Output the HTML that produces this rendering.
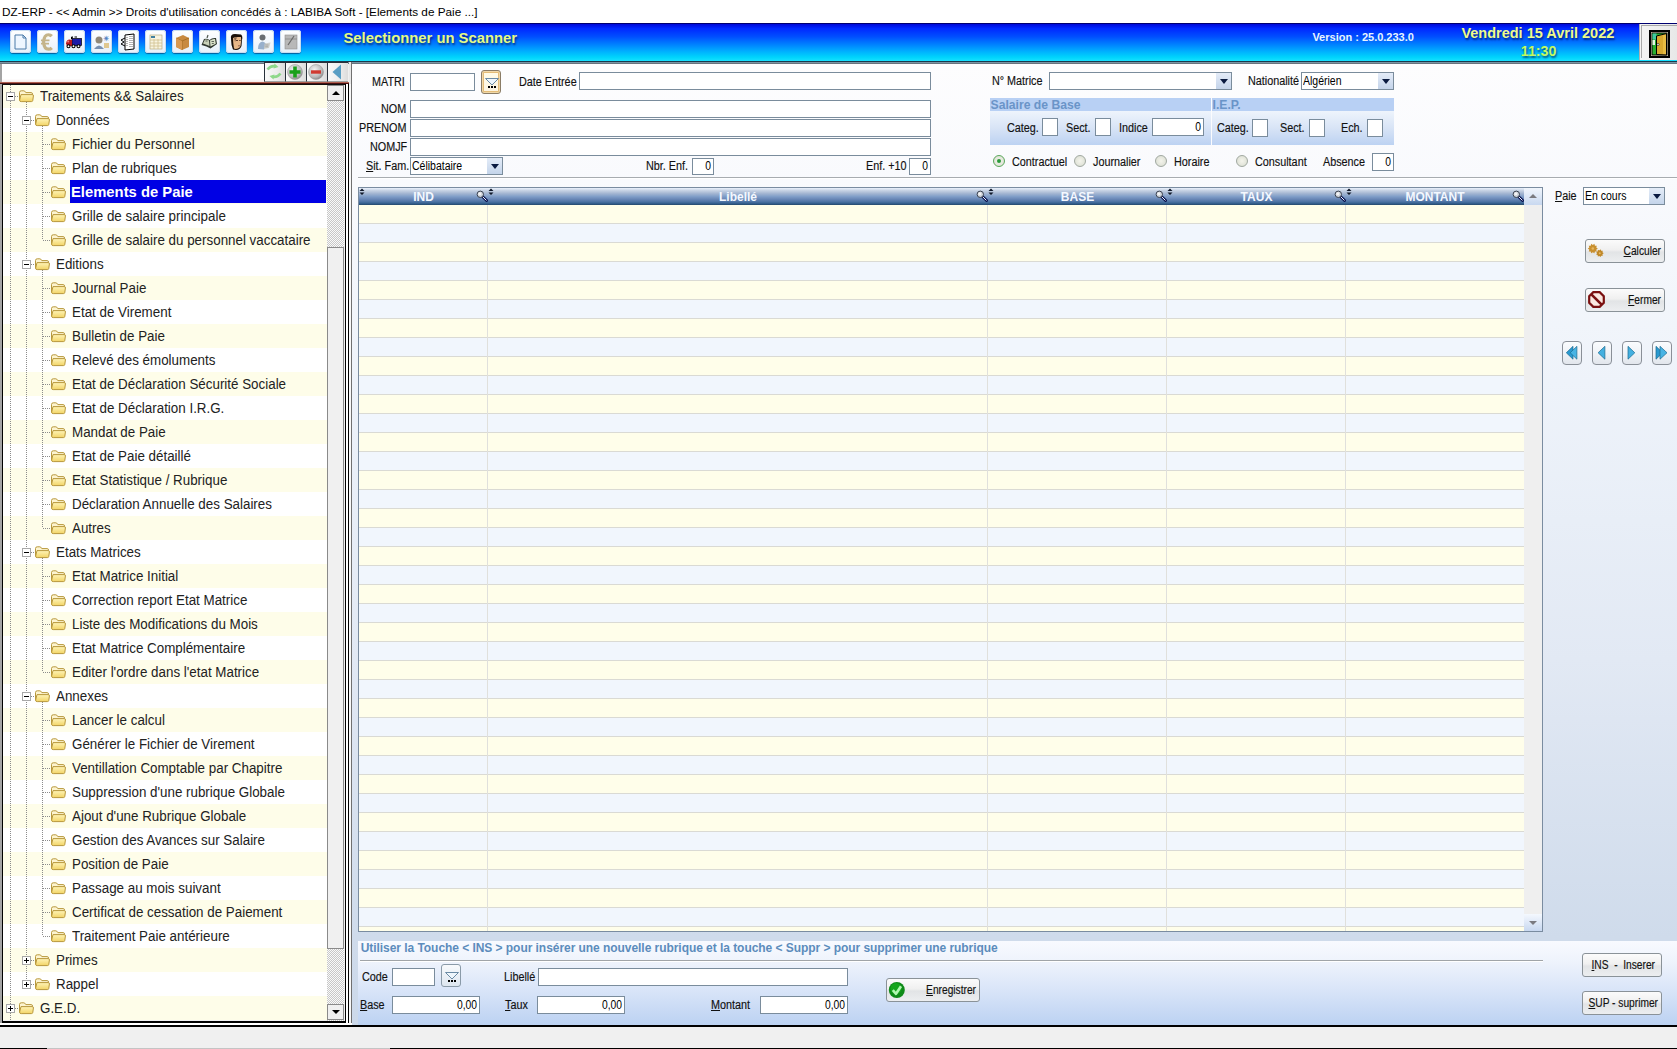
<!DOCTYPE html>
<html><head><meta charset="utf-8"><title>DZ-ERP</title>
<style>
html,body{margin:0;padding:0;}
body{width:1677px;height:1049px;overflow:hidden;position:relative;background:#f0f0f0;font-family:"Liberation Sans",sans-serif;}
.a{position:absolute;}
.t{position:absolute;line-height:0;white-space:nowrap;}
.ib{position:absolute;width:21px;height:23px;border-radius:3px;background:linear-gradient(#ffffff,#e6f0fa);box-shadow:0 1px 1px rgba(0,20,80,.55),inset 0 0 0 1px #c8dcf0;overflow:hidden;}
.ib svg{position:absolute;left:0;top:0;}
.tb{position:absolute;width:21px;height:20px;background:linear-gradient(90deg,#fafafa,#ececec 60%,#dcdcdc);border-left:1px solid #28303a;border-top:1px solid #28303a;border-bottom:1px solid #a0a0a0;box-sizing:border-box;}
.tb svg{position:absolute;left:-1px;top:-1px;}
.tree{position:absolute;left:3px;top:85px;width:324px;height:936px;overflow:hidden;}
.tree .tr{position:absolute;left:0;width:324px;height:24px;}
.tree .vl{position:absolute;width:1px;background-image:linear-gradient(#8c8c8c 50%,transparent 50%);background-size:1px 2px;}
.tree .hl{position:absolute;height:1px;background-image:linear-gradient(90deg,#8c8c8c 50%,transparent 50%);background-size:2px 1px;}
.tree .pm{position:absolute;width:9px;height:9px;border:1px solid #a8a8a8;box-sizing:border-box;background:#fff;}
.tree .pm-h{position:absolute;left:1px;top:3px;width:5px;height:1px;background:#000;}
.tree .pm-v{position:absolute;left:3px;top:1px;width:1px;height:5px;background:#000;}
.tree .fdw{position:absolute;width:17px;height:14px;}
.tree .fd{display:block;}
.tree .tt{position:absolute;line-height:0;font-size:14px;color:#222;white-space:nowrap;transform:scaleX(.955);transform-origin:0 0;}
.tree .tts{position:absolute;line-height:0;font-size:14.8px;font-weight:bold;color:#fff;white-space:nowrap;}
.tree .sel{position:absolute;width:256px;height:23px;background:#0000e4;}
.sbb{position:absolute;width:17px;background:#f0f0f0;border:1px solid #8a8a8a;box-sizing:border-box;}
.arr-up{position:absolute;left:3.5px;top:5px;width:0;height:0;border-left:4px solid transparent;border-right:4px solid transparent;border-bottom:4px solid #000;}
.arr-dn{position:absolute;left:3.5px;top:5px;width:0;height:0;border-left:4px solid transparent;border-right:4px solid transparent;border-top:4px solid #000;}
.grid{position:absolute;overflow:hidden;}
.grid .gr{position:absolute;left:0;width:1165px;height:18px;border-bottom:1px solid #dadad4;}
.cdn{position:absolute;width:0;height:0;border-left:4px solid transparent;border-right:4px solid transparent;border-top:5px solid #0a1a40;}
.lk{position:absolute;border:1px solid;border-radius:3px;box-sizing:border-box;}
.lk svg{position:absolute;left:2px;top:3px;}
.rd{position:absolute;width:12px;height:12px;border-radius:50%;border:1px solid #a0a8a0;box-sizing:border-box;background:radial-gradient(#f4f4ec,#d8dcd0);}
.rdd{position:absolute;left:3px;top:3px;width:4px;height:4px;border-radius:50%;background:#2a9a3a;}
.srt{position:absolute;width:6px;height:8px;}
.srt svg,.mag svg{display:block;}
.mag{position:absolute;width:12px;height:12px;}
.nb{position:absolute;width:20px;height:24px;border:1px solid #8a9098;border-radius:4px;box-sizing:border-box;background:linear-gradient(#fafcfe,#f0f3f7 50%,#e2e6ec);}
.nb svg{position:absolute;left:1px;top:3px;}

</style></head><body>
<div class="a" style="left:0px;top:0px;width:1677px;height:23px;background:#fff"></div>
<div class="t" style="left:2px;top:11.83px;font-size:11.75px;color:#000;">DZ-ERP - &lt;&lt; Admin &gt;&gt; Droits d'utilisation concédés à : LABIBA Soft - [Elements de Paie ...]</div>
<div class="a" style="left:0px;top:23px;width:1677px;height:1px;background:#000070"></div>
<div class="a" style="left:0px;top:24px;width:1677px;height:37px;background:linear-gradient(#0008d8 0%,#0028ff 12%,#0050ff 35%,#0088ff 58%,#00b4ff 76%,#00d4fc 90%,#18e0ff 100%)"></div>
<div class="a" style="left:0px;top:61px;width:1677px;height:1px;background:#18384c"></div>
<div class="a" style="left:0px;top:62px;width:1677px;height:1px;background:#7894a4"></div>
<div class="a" style="left:0px;top:63px;width:1677px;height:1px;background:#68747e"></div>
<div class="ib" style="left:10px;top:30px"><svg width="21" height="23" viewBox="0 0 21 23"><path d="M5 5 H13 L16 8 V19 H5 Z" fill="#eef6ff" stroke="#4a7aa8" stroke-width="1"/><path d="M13 5 V8 H16" fill="none" stroke="#4a7aa8"/></svg></div>
<div class="ib" style="left:37px;top:30px"><svg width="21" height="23" viewBox="0 0 21 23"><path d="M14.8 6.2 Q13.5 4.8 11.5 4.8 Q7 4.8 6.6 12 Q7 19.2 11.5 19.2 Q13.5 19.2 14.8 17.8" fill="none" stroke="#c4b48a" stroke-width="3.2"/><path d="M4 10.3 H12.5 M4 13.7 H12" stroke="#c4b48a" stroke-width="1.8"/><path d="M9 8 Q10 6.5 12 6.5" fill="none" stroke="#f4eccc" stroke-width="1"/></svg></div>
<div class="ib" style="left:64px;top:30px"><svg width="21" height="23" viewBox="0 0 21 23"><rect x="8" y="8.5" width="9.5" height="7" fill="#1a1aa8" stroke="#000" stroke-width=".7"/><path d="M7.5 9 V7 H9 M10.5 7 H13" stroke="#000" stroke-width="1"/><path d="M2 13.5 Q2.5 9.5 5.5 9.5 L8 10 V16 H3 Z" fill="#b81820"/><circle cx="4.2" cy="11.5" r="1" fill="#f08080"/><circle cx="4.5" cy="16.3" r="1.5" fill="#fff" stroke="#000" stroke-width="1.1"/><circle cx="9.5" cy="16.3" r="1.5" fill="#fff" stroke="#000" stroke-width="1.1"/><circle cx="14.5" cy="16.3" r="1.5" fill="#fff" stroke="#000" stroke-width="1.1"/></svg></div>
<div class="ib" style="left:91px;top:30px"><svg width="21" height="23" viewBox="0 0 21 23"><circle cx="8" cy="10" r="3.5" fill="#908878"/><path d="M3 19 Q8 12 13 19 Z" fill="#7890b0"/><text x="12" y="11" font-family="Liberation Sans" font-size="7" font-weight="bold" fill="#5080c0">☀</text><rect x="13" y="13" width="5" height="5" fill="#e0c890"/></svg></div>
<div class="ib" style="left:118px;top:30px"><svg width="21" height="23" viewBox="0 0 21 23"><path d="M7 5 L16 4 V19 L7 20 Z" fill="#fff" stroke="#000" stroke-width="1"/><path d="M9 7 V17 M12 6 V17 M14 6 V17" stroke="#000" stroke-width=".6" stroke-dasharray="1 1"/><path d="M7 8 L3 10 L6 12 L3 14 L7 16" fill="none" stroke="#000" stroke-width="1"/></svg></div>
<div class="ib" style="left:145px;top:30px"><svg width="21" height="23" viewBox="0 0 21 23"><rect x="5" y="5" width="12" height="14" fill="#f8f4e0" stroke="#b0a070" stroke-width=".6"/><rect x="6" y="6" width="4" height="2" fill="#4080a0"/><path d="M5 10 H17 M5 13 H17 M5 16 H17 M9 9 V19 M13 9 V19" stroke="#d0c090" stroke-width=".8"/></svg></div>
<div class="ib" style="left:172px;top:30px"><svg width="21" height="23" viewBox="0 0 21 23"><path d="M4 8 L11 5 L17 8 V17 L10 20 L4 17 Z" fill="#c88a40"/><path d="M4 8 L10 11 L17 8" fill="none" stroke="#a06820" stroke-width=".8"/><path d="M10 11 V20" stroke="#a06820" stroke-width=".8"/><path d="M4 8 L10 11 V20 L4 17 Z" fill="#d89850"/></svg></div>
<div class="ib" style="left:199px;top:30px"><svg width="21" height="23" viewBox="0 0 21 23"><path d="M2.5 15 L5 9 Q8 8 10.5 10 Q13 7.5 17 8 L18 14 L11.5 18.5 Q8 16 2.5 15 Z" fill="#303830"/><path d="M4 13.5 L6 9.5 Q8.5 9 10 10.5 L10.5 16 Q7.5 14.5 4 13.5 Z" fill="#c8d0b8"/><path d="M11 10.5 Q13.5 8.5 16 9 L16.8 13.8 L11.5 16.5 Z" fill="#d8e0c8"/><path d="M6.5 11 h2 M12.5 11.5 h2.5 M12.8 13.5 h2" stroke="#404840" stroke-width=".8"/><path d="M8 8 L9 5" stroke="#505850" stroke-width="1.2"/></svg></div>
<div class="ib" style="left:226px;top:30px"><svg width="21" height="23" viewBox="0 0 21 23"><path d="M5 9 Q4 4 9 4 L15 4.5 Q17 6 16 10 L15.5 16 Q14 20 10 20 L7 19.5 Q5 15 5 9 Z" fill="#1a1008"/><path d="M7 8 Q9 6.5 15 7 L15.2 10.5 L14.5 16 Q13 19 9.5 19 L8 18.5 Q7 13 7 8 Z" fill="#e8b888"/><path d="M8 8 Q9 7 11 7.5 L9 12 Z" fill="#8a6a50"/><path d="M10 10.5 h2 M13.2 10.5 h1.5" stroke="#503020" stroke-width=".9"/><path d="M12 15.8 h2" stroke="#805040" stroke-width=".8"/></svg></div>
<div class="ib" style="left:253px;top:30px"><svg width="21" height="23" viewBox="0 0 21 23"><circle cx="9.5" cy="7.5" r="3" fill="#6a6e72"/><path d="M5 19 Q5 12 9.5 11.5 Q12 12 13 14 L11 19.5 Z" fill="#98b0cc"/><path d="M11.5 13.5 L17.5 12.5 L16 18 L11 19 Z" fill="#c8c8c0" opacity=".8"/><path d="M12.5 15 h3 M12.2 16.8 h3" stroke="#888" stroke-width=".6"/></svg></div>
<div class="ib" style="left:280px;top:30px"><svg width="21" height="23" viewBox="0 0 21 23"><rect x="5" y="5" width="12" height="14" fill="#b8b8b8" stroke="#909090" stroke-width=".6"/><path d="M5 9 H17" stroke="#909090"/><path d="M8 15 L14 6" stroke="#686868" stroke-width="1.2"/></svg></div>
<div class="t" style="left:343.5px;top:37.57px;font-size:14.8px;font-weight:bold;color:#e6fa84;text-shadow:1px 2px 2px rgba(0,0,40,.55);">Selectionner un Scanner</div>
<div class="t" style="left:1312.4px;top:37.29px;font-size:11px;font-weight:bold;color:#e8f4ff;">Version : 25.0.233.0</div>
<div class="t" style="left:1461.4px;top:33.18px;font-size:14.5px;font-weight:bold;color:#eefb8a;text-shadow:1px 2px 2px rgba(0,0,40,.55);">Vendredi 15 Avril 2022</div>
<div class="t" style="left:1520.8px;top:50.78px;font-size:14.2px;font-weight:bold;color:#c4f860;text-shadow:1px 2px 2px rgba(0,0,40,.55);">11:30</div>
<div class="a" style="left:1639px;top:24px;width:38px;height:36px;background:linear-gradient(90deg,#f4f4f4,#e8e8e8);border-left:1px solid #b0b0b0;box-sizing:border-box"></div>
<div class="a" style="left:1641px;top:25px;width:40px;height:33px;border-left:1px solid #a8a8a8;border-top:1px solid #a8a8a8;box-sizing:border-box"></div>
<svg class="a" style="left:1649px;top:30px" width="21" height="28" viewBox="0 0 21 28"><rect x="1" y="1" width="19" height="26" fill="#f0e8c8" stroke="#000" stroke-width="2"/><rect x="3" y="3" width="15" height="22" fill="#28b030" stroke="#000" stroke-width="1"/><rect x="3.5" y="3.5" width="4" height="6" fill="#40c8a0"/><rect x="3.5" y="10" width="2.5" height="5" fill="#e8f8e8"/><path d="M7.5 6 L17.5 3.5 V25 L7.5 24.5 Z" fill="#d8a830" stroke="#000" stroke-width="1"/><rect x="14" y="5" width="3" height="19" fill="#f0c850" opacity=".6"/><circle cx="9" cy="14.5" r="1.1" fill="#fff" stroke="#000" stroke-width=".5"/></svg>
<div class="a" style="left:0px;top:64px;width:2px;height:963px;background:#a4a4a4"></div>
<div class="a" style="left:2px;top:64px;width:262px;height:18px;background:#fff"></div>
<div class="a" style="left:349px;top:62px;width:2px;height:22px;background:#e8e8e8"></div>
<div class="a" style="left:2px;top:79px;width:263px;height:3px;background:linear-gradient(#fff,#f4e8e8)"></div>
<div class="a" style="left:0px;top:82px;width:349px;height:1px;background:#b06050"></div>
<div class="a" style="left:0px;top:83px;width:349px;height:1px;background:#4a1010"></div>
<div class="tb" style="left:264px;top:62px"><svg width="20" height="20" viewBox="0 0 20 20"><path d="M3.5 7.5 Q7 3 12 4.5" fill="none" stroke="#8ed88a" stroke-width="2.6"/><path d="M10.5 1.5 L14.5 5 L9.5 6.5 Z" fill="#8ed88a"/><path d="M16.5 11.5 Q13 16 8 14.5" fill="none" stroke="#8ed88a" stroke-width="2.6"/><path d="M9.5 17.5 L5.5 14 L10.5 12.5 Z" fill="#8ed88a"/></svg></div>
<div class="tb" style="left:285px;top:62px"><svg width="20" height="20" viewBox="0 0 20 20"><defs><radialGradient id="sph" cx=".4" cy=".35" r=".7"><stop offset="0" stop-color="#f4f4f4"/><stop offset=".7" stop-color="#b8b8b8"/><stop offset="1" stop-color="#808080"/></radialGradient></defs><circle cx="10" cy="10" r="7.5" fill="url(#sph)" stroke="#a0a0a0" stroke-width=".6"/><path d="M10 4.5 V15.5 M4.5 10 H15.5" stroke="#1aa01a" stroke-width="3.6"/></svg></div>
<div class="tb" style="left:306px;top:62px"><svg width="20" height="20" viewBox="0 0 20 20"><circle cx="10" cy="10" r="7.5" fill="url(#sph)" stroke="#a0a0a0" stroke-width=".6"/><path d="M5 10 H15" stroke="#d03a30" stroke-width="3.4"/></svg></div>
<div class="tb" style="left:327px;top:62px"><svg width="20" height="20" viewBox="0 0 20 20"><path d="M14 2.5 V17.5 L5.5 10 Z" fill="#5a9ec4"/></svg></div>
<div class="tree"><div class="tr" style="top:-1px;background:#fefde9"></div>
<div class="tr" style="top:23px;background:#ffffff"></div>
<div class="tr" style="top:47px;background:#fefde9"></div>
<div class="tr" style="top:71px;background:#ffffff"></div>
<div class="tr" style="top:95px;background:#fefde9"></div>
<div class="tr" style="top:119px;background:#ffffff"></div>
<div class="tr" style="top:143px;background:#fefde9"></div>
<div class="tr" style="top:167px;background:#ffffff"></div>
<div class="tr" style="top:191px;background:#fefde9"></div>
<div class="tr" style="top:215px;background:#ffffff"></div>
<div class="tr" style="top:239px;background:#fefde9"></div>
<div class="tr" style="top:263px;background:#ffffff"></div>
<div class="tr" style="top:287px;background:#fefde9"></div>
<div class="tr" style="top:311px;background:#ffffff"></div>
<div class="tr" style="top:335px;background:#fefde9"></div>
<div class="tr" style="top:359px;background:#ffffff"></div>
<div class="tr" style="top:383px;background:#fefde9"></div>
<div class="tr" style="top:407px;background:#ffffff"></div>
<div class="tr" style="top:431px;background:#fefde9"></div>
<div class="tr" style="top:455px;background:#ffffff"></div>
<div class="tr" style="top:479px;background:#fefde9"></div>
<div class="tr" style="top:503px;background:#ffffff"></div>
<div class="tr" style="top:527px;background:#fefde9"></div>
<div class="tr" style="top:551px;background:#ffffff"></div>
<div class="tr" style="top:575px;background:#fefde9"></div>
<div class="tr" style="top:599px;background:#ffffff"></div>
<div class="tr" style="top:623px;background:#fefde9"></div>
<div class="tr" style="top:647px;background:#ffffff"></div>
<div class="tr" style="top:671px;background:#fefde9"></div>
<div class="tr" style="top:695px;background:#ffffff"></div>
<div class="tr" style="top:719px;background:#fefde9"></div>
<div class="tr" style="top:743px;background:#ffffff"></div>
<div class="tr" style="top:767px;background:#fefde9"></div>
<div class="tr" style="top:791px;background:#ffffff"></div>
<div class="tr" style="top:815px;background:#fefde9"></div>
<div class="tr" style="top:839px;background:#ffffff"></div>
<div class="tr" style="top:863px;background:#fefde9"></div>
<div class="tr" style="top:887px;background:#ffffff"></div>
<div class="tr" style="top:911px;background:#fefde9"></div>
<div class="vl" style="left:7px;top:0px;height:937px"></div>
<div class="vl" style="left:23px;top:17px;height:882px"></div>
<div class="vl" style="left:39px;top:41px;height:114px"></div>
<div class="hl" style="left:40px;top:59px;width:7px"></div>
<div class="hl" style="left:40px;top:83px;width:7px"></div>
<div class="hl" style="left:40px;top:107px;width:7px"></div>
<div class="hl" style="left:40px;top:131px;width:7px"></div>
<div class="hl" style="left:40px;top:155px;width:7px"></div>
<div class="vl" style="left:39px;top:185px;height:258px"></div>
<div class="hl" style="left:40px;top:203px;width:7px"></div>
<div class="hl" style="left:40px;top:227px;width:7px"></div>
<div class="hl" style="left:40px;top:251px;width:7px"></div>
<div class="hl" style="left:40px;top:275px;width:7px"></div>
<div class="hl" style="left:40px;top:299px;width:7px"></div>
<div class="hl" style="left:40px;top:323px;width:7px"></div>
<div class="hl" style="left:40px;top:347px;width:7px"></div>
<div class="hl" style="left:40px;top:371px;width:7px"></div>
<div class="hl" style="left:40px;top:395px;width:7px"></div>
<div class="hl" style="left:40px;top:419px;width:7px"></div>
<div class="hl" style="left:40px;top:443px;width:7px"></div>
<div class="vl" style="left:39px;top:473px;height:114px"></div>
<div class="hl" style="left:40px;top:491px;width:7px"></div>
<div class="hl" style="left:40px;top:515px;width:7px"></div>
<div class="hl" style="left:40px;top:539px;width:7px"></div>
<div class="hl" style="left:40px;top:563px;width:7px"></div>
<div class="hl" style="left:40px;top:587px;width:7px"></div>
<div class="vl" style="left:39px;top:617px;height:234px"></div>
<div class="hl" style="left:40px;top:635px;width:7px"></div>
<div class="hl" style="left:40px;top:659px;width:7px"></div>
<div class="hl" style="left:40px;top:683px;width:7px"></div>
<div class="hl" style="left:40px;top:707px;width:7px"></div>
<div class="hl" style="left:40px;top:731px;width:7px"></div>
<div class="hl" style="left:40px;top:755px;width:7px"></div>
<div class="hl" style="left:40px;top:779px;width:7px"></div>
<div class="hl" style="left:40px;top:803px;width:7px"></div>
<div class="hl" style="left:40px;top:827px;width:7px"></div>
<div class="hl" style="left:40px;top:851px;width:7px"></div>
<div class="hl" style="left:12px;top:11px;width:4px"></div>
<div class="hl" style="left:28px;top:35px;width:4px"></div>
<div class="hl" style="left:28px;top:179px;width:4px"></div>
<div class="hl" style="left:28px;top:467px;width:4px"></div>
<div class="hl" style="left:28px;top:611px;width:4px"></div>
<div class="hl" style="left:28px;top:875px;width:4px"></div>
<div class="hl" style="left:28px;top:899px;width:4px"></div>
<div class="hl" style="left:12px;top:923px;width:4px"></div>
<div class="pm" style="left:3px;top:7px"><div class="pm-h"></div></div>
<div class="fdw" style="left:15px;top:5px"><svg class="fd" width="17" height="14" viewBox="0 0 17 14"><defs><linearGradient id="fg" x1="0" y1="0" x2="0" y2="1"><stop offset="0" stop-color="#fff4b8"/><stop offset="1" stop-color="#f2d466"/></linearGradient></defs><path d="M1.5 10.5 V2.5 Q1.5 0.8 3.3 0.8 H5.8 Q6.8 0.8 7.4 2 L7.8 2.6 H13.2 Q14.5 2.6 14.5 4 V5" fill="#fdf4d0" stroke="#b8983c" stroke-width="1"/><path d="M3 4.6 H14.3 Q15.6 4.6 15.4 6 L14.8 10.4 Q14.6 11.6 13.4 11.6 H3.2 Q1.6 11.6 1.6 10.2 Z" fill="url(#fg)" stroke="#b8983c" stroke-width="1"/></svg></div>
<div class="tt" style="left:37px;top:11.15px">Traitements &amp;&amp; Salaires</div>
<div class="pm" style="left:19px;top:31px"><div class="pm-h"></div></div>
<div class="fdw" style="left:31px;top:29px"><svg class="fd" width="17" height="14" viewBox="0 0 17 14"><defs><linearGradient id="fg" x1="0" y1="0" x2="0" y2="1"><stop offset="0" stop-color="#fff4b8"/><stop offset="1" stop-color="#f2d466"/></linearGradient></defs><path d="M1.5 10.5 V2.5 Q1.5 0.8 3.3 0.8 H5.8 Q6.8 0.8 7.4 2 L7.8 2.6 H13.2 Q14.5 2.6 14.5 4 V5" fill="#fdf4d0" stroke="#b8983c" stroke-width="1"/><path d="M3 4.6 H14.3 Q15.6 4.6 15.4 6 L14.8 10.4 Q14.6 11.6 13.4 11.6 H3.2 Q1.6 11.6 1.6 10.2 Z" fill="url(#fg)" stroke="#b8983c" stroke-width="1"/></svg></div>
<div class="tt" style="left:53px;top:35.15px">Données</div>
<div class="fdw" style="left:47px;top:53px"><svg class="fd" width="17" height="14" viewBox="0 0 17 14"><defs><linearGradient id="fg" x1="0" y1="0" x2="0" y2="1"><stop offset="0" stop-color="#fff4b8"/><stop offset="1" stop-color="#f2d466"/></linearGradient></defs><path d="M1.5 10.5 V2.5 Q1.5 0.8 3.3 0.8 H5.8 Q6.8 0.8 7.4 2 L7.8 2.6 H13.2 Q14.5 2.6 14.5 4 V5" fill="#fdf4d0" stroke="#b8983c" stroke-width="1"/><path d="M3 4.6 H14.3 Q15.6 4.6 15.4 6 L14.8 10.4 Q14.6 11.6 13.4 11.6 H3.2 Q1.6 11.6 1.6 10.2 Z" fill="url(#fg)" stroke="#b8983c" stroke-width="1"/></svg></div>
<div class="tt" style="left:69px;top:59.15px">Fichier du Personnel</div>
<div class="fdw" style="left:47px;top:77px"><svg class="fd" width="17" height="14" viewBox="0 0 17 14"><defs><linearGradient id="fg" x1="0" y1="0" x2="0" y2="1"><stop offset="0" stop-color="#fff4b8"/><stop offset="1" stop-color="#f2d466"/></linearGradient></defs><path d="M1.5 10.5 V2.5 Q1.5 0.8 3.3 0.8 H5.8 Q6.8 0.8 7.4 2 L7.8 2.6 H13.2 Q14.5 2.6 14.5 4 V5" fill="#fdf4d0" stroke="#b8983c" stroke-width="1"/><path d="M3 4.6 H14.3 Q15.6 4.6 15.4 6 L14.8 10.4 Q14.6 11.6 13.4 11.6 H3.2 Q1.6 11.6 1.6 10.2 Z" fill="url(#fg)" stroke="#b8983c" stroke-width="1"/></svg></div>
<div class="tt" style="left:69px;top:83.15px">Plan de rubriques</div>
<div class="fdw" style="left:47px;top:101px"><svg class="fd" width="17" height="14" viewBox="0 0 17 14"><defs><linearGradient id="fg" x1="0" y1="0" x2="0" y2="1"><stop offset="0" stop-color="#fff4b8"/><stop offset="1" stop-color="#f2d466"/></linearGradient></defs><path d="M1.5 10.5 V2.5 Q1.5 0.8 3.3 0.8 H5.8 Q6.8 0.8 7.4 2 L7.8 2.6 H13.2 Q14.5 2.6 14.5 4 V5" fill="#fdf4d0" stroke="#b8983c" stroke-width="1"/><path d="M3 4.6 H14.3 Q15.6 4.6 15.4 6 L14.8 10.4 Q14.6 11.6 13.4 11.6 H3.2 Q1.6 11.6 1.6 10.2 Z" fill="url(#fg)" stroke="#b8983c" stroke-width="1"/></svg></div>
<div class="sel" style="left:67px;top:95px;"></div>
<div class="tts" style="left:68px;top:106.87px">Elements de Paie</div>
<div class="fdw" style="left:47px;top:125px"><svg class="fd" width="17" height="14" viewBox="0 0 17 14"><defs><linearGradient id="fg" x1="0" y1="0" x2="0" y2="1"><stop offset="0" stop-color="#fff4b8"/><stop offset="1" stop-color="#f2d466"/></linearGradient></defs><path d="M1.5 10.5 V2.5 Q1.5 0.8 3.3 0.8 H5.8 Q6.8 0.8 7.4 2 L7.8 2.6 H13.2 Q14.5 2.6 14.5 4 V5" fill="#fdf4d0" stroke="#b8983c" stroke-width="1"/><path d="M3 4.6 H14.3 Q15.6 4.6 15.4 6 L14.8 10.4 Q14.6 11.6 13.4 11.6 H3.2 Q1.6 11.6 1.6 10.2 Z" fill="url(#fg)" stroke="#b8983c" stroke-width="1"/></svg></div>
<div class="tt" style="left:69px;top:131.15px">Grille de salaire principale</div>
<div class="fdw" style="left:47px;top:149px"><svg class="fd" width="17" height="14" viewBox="0 0 17 14"><defs><linearGradient id="fg" x1="0" y1="0" x2="0" y2="1"><stop offset="0" stop-color="#fff4b8"/><stop offset="1" stop-color="#f2d466"/></linearGradient></defs><path d="M1.5 10.5 V2.5 Q1.5 0.8 3.3 0.8 H5.8 Q6.8 0.8 7.4 2 L7.8 2.6 H13.2 Q14.5 2.6 14.5 4 V5" fill="#fdf4d0" stroke="#b8983c" stroke-width="1"/><path d="M3 4.6 H14.3 Q15.6 4.6 15.4 6 L14.8 10.4 Q14.6 11.6 13.4 11.6 H3.2 Q1.6 11.6 1.6 10.2 Z" fill="url(#fg)" stroke="#b8983c" stroke-width="1"/></svg></div>
<div class="tt" style="left:69px;top:155.15px">Grille de salaire du personnel vaccataire</div>
<div class="pm" style="left:19px;top:175px"><div class="pm-h"></div></div>
<div class="fdw" style="left:31px;top:173px"><svg class="fd" width="17" height="14" viewBox="0 0 17 14"><defs><linearGradient id="fg" x1="0" y1="0" x2="0" y2="1"><stop offset="0" stop-color="#fff4b8"/><stop offset="1" stop-color="#f2d466"/></linearGradient></defs><path d="M1.5 10.5 V2.5 Q1.5 0.8 3.3 0.8 H5.8 Q6.8 0.8 7.4 2 L7.8 2.6 H13.2 Q14.5 2.6 14.5 4 V5" fill="#fdf4d0" stroke="#b8983c" stroke-width="1"/><path d="M3 4.6 H14.3 Q15.6 4.6 15.4 6 L14.8 10.4 Q14.6 11.6 13.4 11.6 H3.2 Q1.6 11.6 1.6 10.2 Z" fill="url(#fg)" stroke="#b8983c" stroke-width="1"/></svg></div>
<div class="tt" style="left:53px;top:179.15px">Editions</div>
<div class="fdw" style="left:47px;top:197px"><svg class="fd" width="17" height="14" viewBox="0 0 17 14"><defs><linearGradient id="fg" x1="0" y1="0" x2="0" y2="1"><stop offset="0" stop-color="#fff4b8"/><stop offset="1" stop-color="#f2d466"/></linearGradient></defs><path d="M1.5 10.5 V2.5 Q1.5 0.8 3.3 0.8 H5.8 Q6.8 0.8 7.4 2 L7.8 2.6 H13.2 Q14.5 2.6 14.5 4 V5" fill="#fdf4d0" stroke="#b8983c" stroke-width="1"/><path d="M3 4.6 H14.3 Q15.6 4.6 15.4 6 L14.8 10.4 Q14.6 11.6 13.4 11.6 H3.2 Q1.6 11.6 1.6 10.2 Z" fill="url(#fg)" stroke="#b8983c" stroke-width="1"/></svg></div>
<div class="tt" style="left:69px;top:203.15px">Journal Paie</div>
<div class="fdw" style="left:47px;top:221px"><svg class="fd" width="17" height="14" viewBox="0 0 17 14"><defs><linearGradient id="fg" x1="0" y1="0" x2="0" y2="1"><stop offset="0" stop-color="#fff4b8"/><stop offset="1" stop-color="#f2d466"/></linearGradient></defs><path d="M1.5 10.5 V2.5 Q1.5 0.8 3.3 0.8 H5.8 Q6.8 0.8 7.4 2 L7.8 2.6 H13.2 Q14.5 2.6 14.5 4 V5" fill="#fdf4d0" stroke="#b8983c" stroke-width="1"/><path d="M3 4.6 H14.3 Q15.6 4.6 15.4 6 L14.8 10.4 Q14.6 11.6 13.4 11.6 H3.2 Q1.6 11.6 1.6 10.2 Z" fill="url(#fg)" stroke="#b8983c" stroke-width="1"/></svg></div>
<div class="tt" style="left:69px;top:227.15px">Etat de Virement</div>
<div class="fdw" style="left:47px;top:245px"><svg class="fd" width="17" height="14" viewBox="0 0 17 14"><defs><linearGradient id="fg" x1="0" y1="0" x2="0" y2="1"><stop offset="0" stop-color="#fff4b8"/><stop offset="1" stop-color="#f2d466"/></linearGradient></defs><path d="M1.5 10.5 V2.5 Q1.5 0.8 3.3 0.8 H5.8 Q6.8 0.8 7.4 2 L7.8 2.6 H13.2 Q14.5 2.6 14.5 4 V5" fill="#fdf4d0" stroke="#b8983c" stroke-width="1"/><path d="M3 4.6 H14.3 Q15.6 4.6 15.4 6 L14.8 10.4 Q14.6 11.6 13.4 11.6 H3.2 Q1.6 11.6 1.6 10.2 Z" fill="url(#fg)" stroke="#b8983c" stroke-width="1"/></svg></div>
<div class="tt" style="left:69px;top:251.15px">Bulletin de Paie</div>
<div class="fdw" style="left:47px;top:269px"><svg class="fd" width="17" height="14" viewBox="0 0 17 14"><defs><linearGradient id="fg" x1="0" y1="0" x2="0" y2="1"><stop offset="0" stop-color="#fff4b8"/><stop offset="1" stop-color="#f2d466"/></linearGradient></defs><path d="M1.5 10.5 V2.5 Q1.5 0.8 3.3 0.8 H5.8 Q6.8 0.8 7.4 2 L7.8 2.6 H13.2 Q14.5 2.6 14.5 4 V5" fill="#fdf4d0" stroke="#b8983c" stroke-width="1"/><path d="M3 4.6 H14.3 Q15.6 4.6 15.4 6 L14.8 10.4 Q14.6 11.6 13.4 11.6 H3.2 Q1.6 11.6 1.6 10.2 Z" fill="url(#fg)" stroke="#b8983c" stroke-width="1"/></svg></div>
<div class="tt" style="left:69px;top:275.15px">Relevé des émoluments</div>
<div class="fdw" style="left:47px;top:293px"><svg class="fd" width="17" height="14" viewBox="0 0 17 14"><defs><linearGradient id="fg" x1="0" y1="0" x2="0" y2="1"><stop offset="0" stop-color="#fff4b8"/><stop offset="1" stop-color="#f2d466"/></linearGradient></defs><path d="M1.5 10.5 V2.5 Q1.5 0.8 3.3 0.8 H5.8 Q6.8 0.8 7.4 2 L7.8 2.6 H13.2 Q14.5 2.6 14.5 4 V5" fill="#fdf4d0" stroke="#b8983c" stroke-width="1"/><path d="M3 4.6 H14.3 Q15.6 4.6 15.4 6 L14.8 10.4 Q14.6 11.6 13.4 11.6 H3.2 Q1.6 11.6 1.6 10.2 Z" fill="url(#fg)" stroke="#b8983c" stroke-width="1"/></svg></div>
<div class="tt" style="left:69px;top:299.15px">Etat de Déclaration Sécurité Sociale</div>
<div class="fdw" style="left:47px;top:317px"><svg class="fd" width="17" height="14" viewBox="0 0 17 14"><defs><linearGradient id="fg" x1="0" y1="0" x2="0" y2="1"><stop offset="0" stop-color="#fff4b8"/><stop offset="1" stop-color="#f2d466"/></linearGradient></defs><path d="M1.5 10.5 V2.5 Q1.5 0.8 3.3 0.8 H5.8 Q6.8 0.8 7.4 2 L7.8 2.6 H13.2 Q14.5 2.6 14.5 4 V5" fill="#fdf4d0" stroke="#b8983c" stroke-width="1"/><path d="M3 4.6 H14.3 Q15.6 4.6 15.4 6 L14.8 10.4 Q14.6 11.6 13.4 11.6 H3.2 Q1.6 11.6 1.6 10.2 Z" fill="url(#fg)" stroke="#b8983c" stroke-width="1"/></svg></div>
<div class="tt" style="left:69px;top:323.15px">Etat de Déclaration I.R.G.</div>
<div class="fdw" style="left:47px;top:341px"><svg class="fd" width="17" height="14" viewBox="0 0 17 14"><defs><linearGradient id="fg" x1="0" y1="0" x2="0" y2="1"><stop offset="0" stop-color="#fff4b8"/><stop offset="1" stop-color="#f2d466"/></linearGradient></defs><path d="M1.5 10.5 V2.5 Q1.5 0.8 3.3 0.8 H5.8 Q6.8 0.8 7.4 2 L7.8 2.6 H13.2 Q14.5 2.6 14.5 4 V5" fill="#fdf4d0" stroke="#b8983c" stroke-width="1"/><path d="M3 4.6 H14.3 Q15.6 4.6 15.4 6 L14.8 10.4 Q14.6 11.6 13.4 11.6 H3.2 Q1.6 11.6 1.6 10.2 Z" fill="url(#fg)" stroke="#b8983c" stroke-width="1"/></svg></div>
<div class="tt" style="left:69px;top:347.15px">Mandat de Paie</div>
<div class="fdw" style="left:47px;top:365px"><svg class="fd" width="17" height="14" viewBox="0 0 17 14"><defs><linearGradient id="fg" x1="0" y1="0" x2="0" y2="1"><stop offset="0" stop-color="#fff4b8"/><stop offset="1" stop-color="#f2d466"/></linearGradient></defs><path d="M1.5 10.5 V2.5 Q1.5 0.8 3.3 0.8 H5.8 Q6.8 0.8 7.4 2 L7.8 2.6 H13.2 Q14.5 2.6 14.5 4 V5" fill="#fdf4d0" stroke="#b8983c" stroke-width="1"/><path d="M3 4.6 H14.3 Q15.6 4.6 15.4 6 L14.8 10.4 Q14.6 11.6 13.4 11.6 H3.2 Q1.6 11.6 1.6 10.2 Z" fill="url(#fg)" stroke="#b8983c" stroke-width="1"/></svg></div>
<div class="tt" style="left:69px;top:371.15px">Etat de Paie détaillé</div>
<div class="fdw" style="left:47px;top:389px"><svg class="fd" width="17" height="14" viewBox="0 0 17 14"><defs><linearGradient id="fg" x1="0" y1="0" x2="0" y2="1"><stop offset="0" stop-color="#fff4b8"/><stop offset="1" stop-color="#f2d466"/></linearGradient></defs><path d="M1.5 10.5 V2.5 Q1.5 0.8 3.3 0.8 H5.8 Q6.8 0.8 7.4 2 L7.8 2.6 H13.2 Q14.5 2.6 14.5 4 V5" fill="#fdf4d0" stroke="#b8983c" stroke-width="1"/><path d="M3 4.6 H14.3 Q15.6 4.6 15.4 6 L14.8 10.4 Q14.6 11.6 13.4 11.6 H3.2 Q1.6 11.6 1.6 10.2 Z" fill="url(#fg)" stroke="#b8983c" stroke-width="1"/></svg></div>
<div class="tt" style="left:69px;top:395.15px">Etat Statistique / Rubrique</div>
<div class="fdw" style="left:47px;top:413px"><svg class="fd" width="17" height="14" viewBox="0 0 17 14"><defs><linearGradient id="fg" x1="0" y1="0" x2="0" y2="1"><stop offset="0" stop-color="#fff4b8"/><stop offset="1" stop-color="#f2d466"/></linearGradient></defs><path d="M1.5 10.5 V2.5 Q1.5 0.8 3.3 0.8 H5.8 Q6.8 0.8 7.4 2 L7.8 2.6 H13.2 Q14.5 2.6 14.5 4 V5" fill="#fdf4d0" stroke="#b8983c" stroke-width="1"/><path d="M3 4.6 H14.3 Q15.6 4.6 15.4 6 L14.8 10.4 Q14.6 11.6 13.4 11.6 H3.2 Q1.6 11.6 1.6 10.2 Z" fill="url(#fg)" stroke="#b8983c" stroke-width="1"/></svg></div>
<div class="tt" style="left:69px;top:419.15px">Déclaration Annuelle des Salaires</div>
<div class="fdw" style="left:47px;top:437px"><svg class="fd" width="17" height="14" viewBox="0 0 17 14"><defs><linearGradient id="fg" x1="0" y1="0" x2="0" y2="1"><stop offset="0" stop-color="#fff4b8"/><stop offset="1" stop-color="#f2d466"/></linearGradient></defs><path d="M1.5 10.5 V2.5 Q1.5 0.8 3.3 0.8 H5.8 Q6.8 0.8 7.4 2 L7.8 2.6 H13.2 Q14.5 2.6 14.5 4 V5" fill="#fdf4d0" stroke="#b8983c" stroke-width="1"/><path d="M3 4.6 H14.3 Q15.6 4.6 15.4 6 L14.8 10.4 Q14.6 11.6 13.4 11.6 H3.2 Q1.6 11.6 1.6 10.2 Z" fill="url(#fg)" stroke="#b8983c" stroke-width="1"/></svg></div>
<div class="tt" style="left:69px;top:443.15px">Autres</div>
<div class="pm" style="left:19px;top:463px"><div class="pm-h"></div></div>
<div class="fdw" style="left:31px;top:461px"><svg class="fd" width="17" height="14" viewBox="0 0 17 14"><defs><linearGradient id="fg" x1="0" y1="0" x2="0" y2="1"><stop offset="0" stop-color="#fff4b8"/><stop offset="1" stop-color="#f2d466"/></linearGradient></defs><path d="M1.5 10.5 V2.5 Q1.5 0.8 3.3 0.8 H5.8 Q6.8 0.8 7.4 2 L7.8 2.6 H13.2 Q14.5 2.6 14.5 4 V5" fill="#fdf4d0" stroke="#b8983c" stroke-width="1"/><path d="M3 4.6 H14.3 Q15.6 4.6 15.4 6 L14.8 10.4 Q14.6 11.6 13.4 11.6 H3.2 Q1.6 11.6 1.6 10.2 Z" fill="url(#fg)" stroke="#b8983c" stroke-width="1"/></svg></div>
<div class="tt" style="left:53px;top:467.15px">Etats Matrices</div>
<div class="fdw" style="left:47px;top:485px"><svg class="fd" width="17" height="14" viewBox="0 0 17 14"><defs><linearGradient id="fg" x1="0" y1="0" x2="0" y2="1"><stop offset="0" stop-color="#fff4b8"/><stop offset="1" stop-color="#f2d466"/></linearGradient></defs><path d="M1.5 10.5 V2.5 Q1.5 0.8 3.3 0.8 H5.8 Q6.8 0.8 7.4 2 L7.8 2.6 H13.2 Q14.5 2.6 14.5 4 V5" fill="#fdf4d0" stroke="#b8983c" stroke-width="1"/><path d="M3 4.6 H14.3 Q15.6 4.6 15.4 6 L14.8 10.4 Q14.6 11.6 13.4 11.6 H3.2 Q1.6 11.6 1.6 10.2 Z" fill="url(#fg)" stroke="#b8983c" stroke-width="1"/></svg></div>
<div class="tt" style="left:69px;top:491.15px">Etat Matrice Initial</div>
<div class="fdw" style="left:47px;top:509px"><svg class="fd" width="17" height="14" viewBox="0 0 17 14"><defs><linearGradient id="fg" x1="0" y1="0" x2="0" y2="1"><stop offset="0" stop-color="#fff4b8"/><stop offset="1" stop-color="#f2d466"/></linearGradient></defs><path d="M1.5 10.5 V2.5 Q1.5 0.8 3.3 0.8 H5.8 Q6.8 0.8 7.4 2 L7.8 2.6 H13.2 Q14.5 2.6 14.5 4 V5" fill="#fdf4d0" stroke="#b8983c" stroke-width="1"/><path d="M3 4.6 H14.3 Q15.6 4.6 15.4 6 L14.8 10.4 Q14.6 11.6 13.4 11.6 H3.2 Q1.6 11.6 1.6 10.2 Z" fill="url(#fg)" stroke="#b8983c" stroke-width="1"/></svg></div>
<div class="tt" style="left:69px;top:515.15px">Correction report Etat Matrice</div>
<div class="fdw" style="left:47px;top:533px"><svg class="fd" width="17" height="14" viewBox="0 0 17 14"><defs><linearGradient id="fg" x1="0" y1="0" x2="0" y2="1"><stop offset="0" stop-color="#fff4b8"/><stop offset="1" stop-color="#f2d466"/></linearGradient></defs><path d="M1.5 10.5 V2.5 Q1.5 0.8 3.3 0.8 H5.8 Q6.8 0.8 7.4 2 L7.8 2.6 H13.2 Q14.5 2.6 14.5 4 V5" fill="#fdf4d0" stroke="#b8983c" stroke-width="1"/><path d="M3 4.6 H14.3 Q15.6 4.6 15.4 6 L14.8 10.4 Q14.6 11.6 13.4 11.6 H3.2 Q1.6 11.6 1.6 10.2 Z" fill="url(#fg)" stroke="#b8983c" stroke-width="1"/></svg></div>
<div class="tt" style="left:69px;top:539.15px">Liste des Modifications du Mois</div>
<div class="fdw" style="left:47px;top:557px"><svg class="fd" width="17" height="14" viewBox="0 0 17 14"><defs><linearGradient id="fg" x1="0" y1="0" x2="0" y2="1"><stop offset="0" stop-color="#fff4b8"/><stop offset="1" stop-color="#f2d466"/></linearGradient></defs><path d="M1.5 10.5 V2.5 Q1.5 0.8 3.3 0.8 H5.8 Q6.8 0.8 7.4 2 L7.8 2.6 H13.2 Q14.5 2.6 14.5 4 V5" fill="#fdf4d0" stroke="#b8983c" stroke-width="1"/><path d="M3 4.6 H14.3 Q15.6 4.6 15.4 6 L14.8 10.4 Q14.6 11.6 13.4 11.6 H3.2 Q1.6 11.6 1.6 10.2 Z" fill="url(#fg)" stroke="#b8983c" stroke-width="1"/></svg></div>
<div class="tt" style="left:69px;top:563.15px">Etat Matrice Complémentaire</div>
<div class="fdw" style="left:47px;top:581px"><svg class="fd" width="17" height="14" viewBox="0 0 17 14"><defs><linearGradient id="fg" x1="0" y1="0" x2="0" y2="1"><stop offset="0" stop-color="#fff4b8"/><stop offset="1" stop-color="#f2d466"/></linearGradient></defs><path d="M1.5 10.5 V2.5 Q1.5 0.8 3.3 0.8 H5.8 Q6.8 0.8 7.4 2 L7.8 2.6 H13.2 Q14.5 2.6 14.5 4 V5" fill="#fdf4d0" stroke="#b8983c" stroke-width="1"/><path d="M3 4.6 H14.3 Q15.6 4.6 15.4 6 L14.8 10.4 Q14.6 11.6 13.4 11.6 H3.2 Q1.6 11.6 1.6 10.2 Z" fill="url(#fg)" stroke="#b8983c" stroke-width="1"/></svg></div>
<div class="tt" style="left:69px;top:587.15px">Editer l'ordre dans l'etat Matrice</div>
<div class="pm" style="left:19px;top:607px"><div class="pm-h"></div></div>
<div class="fdw" style="left:31px;top:605px"><svg class="fd" width="17" height="14" viewBox="0 0 17 14"><defs><linearGradient id="fg" x1="0" y1="0" x2="0" y2="1"><stop offset="0" stop-color="#fff4b8"/><stop offset="1" stop-color="#f2d466"/></linearGradient></defs><path d="M1.5 10.5 V2.5 Q1.5 0.8 3.3 0.8 H5.8 Q6.8 0.8 7.4 2 L7.8 2.6 H13.2 Q14.5 2.6 14.5 4 V5" fill="#fdf4d0" stroke="#b8983c" stroke-width="1"/><path d="M3 4.6 H14.3 Q15.6 4.6 15.4 6 L14.8 10.4 Q14.6 11.6 13.4 11.6 H3.2 Q1.6 11.6 1.6 10.2 Z" fill="url(#fg)" stroke="#b8983c" stroke-width="1"/></svg></div>
<div class="tt" style="left:53px;top:611.15px">Annexes</div>
<div class="fdw" style="left:47px;top:629px"><svg class="fd" width="17" height="14" viewBox="0 0 17 14"><defs><linearGradient id="fg" x1="0" y1="0" x2="0" y2="1"><stop offset="0" stop-color="#fff4b8"/><stop offset="1" stop-color="#f2d466"/></linearGradient></defs><path d="M1.5 10.5 V2.5 Q1.5 0.8 3.3 0.8 H5.8 Q6.8 0.8 7.4 2 L7.8 2.6 H13.2 Q14.5 2.6 14.5 4 V5" fill="#fdf4d0" stroke="#b8983c" stroke-width="1"/><path d="M3 4.6 H14.3 Q15.6 4.6 15.4 6 L14.8 10.4 Q14.6 11.6 13.4 11.6 H3.2 Q1.6 11.6 1.6 10.2 Z" fill="url(#fg)" stroke="#b8983c" stroke-width="1"/></svg></div>
<div class="tt" style="left:69px;top:635.15px">Lancer le calcul</div>
<div class="fdw" style="left:47px;top:653px"><svg class="fd" width="17" height="14" viewBox="0 0 17 14"><defs><linearGradient id="fg" x1="0" y1="0" x2="0" y2="1"><stop offset="0" stop-color="#fff4b8"/><stop offset="1" stop-color="#f2d466"/></linearGradient></defs><path d="M1.5 10.5 V2.5 Q1.5 0.8 3.3 0.8 H5.8 Q6.8 0.8 7.4 2 L7.8 2.6 H13.2 Q14.5 2.6 14.5 4 V5" fill="#fdf4d0" stroke="#b8983c" stroke-width="1"/><path d="M3 4.6 H14.3 Q15.6 4.6 15.4 6 L14.8 10.4 Q14.6 11.6 13.4 11.6 H3.2 Q1.6 11.6 1.6 10.2 Z" fill="url(#fg)" stroke="#b8983c" stroke-width="1"/></svg></div>
<div class="tt" style="left:69px;top:659.15px">Générer le Fichier de Virement</div>
<div class="fdw" style="left:47px;top:677px"><svg class="fd" width="17" height="14" viewBox="0 0 17 14"><defs><linearGradient id="fg" x1="0" y1="0" x2="0" y2="1"><stop offset="0" stop-color="#fff4b8"/><stop offset="1" stop-color="#f2d466"/></linearGradient></defs><path d="M1.5 10.5 V2.5 Q1.5 0.8 3.3 0.8 H5.8 Q6.8 0.8 7.4 2 L7.8 2.6 H13.2 Q14.5 2.6 14.5 4 V5" fill="#fdf4d0" stroke="#b8983c" stroke-width="1"/><path d="M3 4.6 H14.3 Q15.6 4.6 15.4 6 L14.8 10.4 Q14.6 11.6 13.4 11.6 H3.2 Q1.6 11.6 1.6 10.2 Z" fill="url(#fg)" stroke="#b8983c" stroke-width="1"/></svg></div>
<div class="tt" style="left:69px;top:683.15px">Ventillation Comptable par Chapitre</div>
<div class="fdw" style="left:47px;top:701px"><svg class="fd" width="17" height="14" viewBox="0 0 17 14"><defs><linearGradient id="fg" x1="0" y1="0" x2="0" y2="1"><stop offset="0" stop-color="#fff4b8"/><stop offset="1" stop-color="#f2d466"/></linearGradient></defs><path d="M1.5 10.5 V2.5 Q1.5 0.8 3.3 0.8 H5.8 Q6.8 0.8 7.4 2 L7.8 2.6 H13.2 Q14.5 2.6 14.5 4 V5" fill="#fdf4d0" stroke="#b8983c" stroke-width="1"/><path d="M3 4.6 H14.3 Q15.6 4.6 15.4 6 L14.8 10.4 Q14.6 11.6 13.4 11.6 H3.2 Q1.6 11.6 1.6 10.2 Z" fill="url(#fg)" stroke="#b8983c" stroke-width="1"/></svg></div>
<div class="tt" style="left:69px;top:707.15px">Suppression d'une rubrique Globale</div>
<div class="fdw" style="left:47px;top:725px"><svg class="fd" width="17" height="14" viewBox="0 0 17 14"><defs><linearGradient id="fg" x1="0" y1="0" x2="0" y2="1"><stop offset="0" stop-color="#fff4b8"/><stop offset="1" stop-color="#f2d466"/></linearGradient></defs><path d="M1.5 10.5 V2.5 Q1.5 0.8 3.3 0.8 H5.8 Q6.8 0.8 7.4 2 L7.8 2.6 H13.2 Q14.5 2.6 14.5 4 V5" fill="#fdf4d0" stroke="#b8983c" stroke-width="1"/><path d="M3 4.6 H14.3 Q15.6 4.6 15.4 6 L14.8 10.4 Q14.6 11.6 13.4 11.6 H3.2 Q1.6 11.6 1.6 10.2 Z" fill="url(#fg)" stroke="#b8983c" stroke-width="1"/></svg></div>
<div class="tt" style="left:69px;top:731.15px">Ajout d'une Rubrique Globale</div>
<div class="fdw" style="left:47px;top:749px"><svg class="fd" width="17" height="14" viewBox="0 0 17 14"><defs><linearGradient id="fg" x1="0" y1="0" x2="0" y2="1"><stop offset="0" stop-color="#fff4b8"/><stop offset="1" stop-color="#f2d466"/></linearGradient></defs><path d="M1.5 10.5 V2.5 Q1.5 0.8 3.3 0.8 H5.8 Q6.8 0.8 7.4 2 L7.8 2.6 H13.2 Q14.5 2.6 14.5 4 V5" fill="#fdf4d0" stroke="#b8983c" stroke-width="1"/><path d="M3 4.6 H14.3 Q15.6 4.6 15.4 6 L14.8 10.4 Q14.6 11.6 13.4 11.6 H3.2 Q1.6 11.6 1.6 10.2 Z" fill="url(#fg)" stroke="#b8983c" stroke-width="1"/></svg></div>
<div class="tt" style="left:69px;top:755.15px">Gestion des Avances sur Salaire</div>
<div class="fdw" style="left:47px;top:773px"><svg class="fd" width="17" height="14" viewBox="0 0 17 14"><defs><linearGradient id="fg" x1="0" y1="0" x2="0" y2="1"><stop offset="0" stop-color="#fff4b8"/><stop offset="1" stop-color="#f2d466"/></linearGradient></defs><path d="M1.5 10.5 V2.5 Q1.5 0.8 3.3 0.8 H5.8 Q6.8 0.8 7.4 2 L7.8 2.6 H13.2 Q14.5 2.6 14.5 4 V5" fill="#fdf4d0" stroke="#b8983c" stroke-width="1"/><path d="M3 4.6 H14.3 Q15.6 4.6 15.4 6 L14.8 10.4 Q14.6 11.6 13.4 11.6 H3.2 Q1.6 11.6 1.6 10.2 Z" fill="url(#fg)" stroke="#b8983c" stroke-width="1"/></svg></div>
<div class="tt" style="left:69px;top:779.15px">Position de Paie</div>
<div class="fdw" style="left:47px;top:797px"><svg class="fd" width="17" height="14" viewBox="0 0 17 14"><defs><linearGradient id="fg" x1="0" y1="0" x2="0" y2="1"><stop offset="0" stop-color="#fff4b8"/><stop offset="1" stop-color="#f2d466"/></linearGradient></defs><path d="M1.5 10.5 V2.5 Q1.5 0.8 3.3 0.8 H5.8 Q6.8 0.8 7.4 2 L7.8 2.6 H13.2 Q14.5 2.6 14.5 4 V5" fill="#fdf4d0" stroke="#b8983c" stroke-width="1"/><path d="M3 4.6 H14.3 Q15.6 4.6 15.4 6 L14.8 10.4 Q14.6 11.6 13.4 11.6 H3.2 Q1.6 11.6 1.6 10.2 Z" fill="url(#fg)" stroke="#b8983c" stroke-width="1"/></svg></div>
<div class="tt" style="left:69px;top:803.15px">Passage au mois suivant</div>
<div class="fdw" style="left:47px;top:821px"><svg class="fd" width="17" height="14" viewBox="0 0 17 14"><defs><linearGradient id="fg" x1="0" y1="0" x2="0" y2="1"><stop offset="0" stop-color="#fff4b8"/><stop offset="1" stop-color="#f2d466"/></linearGradient></defs><path d="M1.5 10.5 V2.5 Q1.5 0.8 3.3 0.8 H5.8 Q6.8 0.8 7.4 2 L7.8 2.6 H13.2 Q14.5 2.6 14.5 4 V5" fill="#fdf4d0" stroke="#b8983c" stroke-width="1"/><path d="M3 4.6 H14.3 Q15.6 4.6 15.4 6 L14.8 10.4 Q14.6 11.6 13.4 11.6 H3.2 Q1.6 11.6 1.6 10.2 Z" fill="url(#fg)" stroke="#b8983c" stroke-width="1"/></svg></div>
<div class="tt" style="left:69px;top:827.15px">Certificat de cessation de Paiement</div>
<div class="fdw" style="left:47px;top:845px"><svg class="fd" width="17" height="14" viewBox="0 0 17 14"><defs><linearGradient id="fg" x1="0" y1="0" x2="0" y2="1"><stop offset="0" stop-color="#fff4b8"/><stop offset="1" stop-color="#f2d466"/></linearGradient></defs><path d="M1.5 10.5 V2.5 Q1.5 0.8 3.3 0.8 H5.8 Q6.8 0.8 7.4 2 L7.8 2.6 H13.2 Q14.5 2.6 14.5 4 V5" fill="#fdf4d0" stroke="#b8983c" stroke-width="1"/><path d="M3 4.6 H14.3 Q15.6 4.6 15.4 6 L14.8 10.4 Q14.6 11.6 13.4 11.6 H3.2 Q1.6 11.6 1.6 10.2 Z" fill="url(#fg)" stroke="#b8983c" stroke-width="1"/></svg></div>
<div class="tt" style="left:69px;top:851.15px">Traitement Paie antérieure</div>
<div class="pm" style="left:19px;top:871px"><div class="pm-h"></div><div class="pm-v"></div></div>
<div class="fdw" style="left:31px;top:869px"><svg class="fd" width="17" height="14" viewBox="0 0 17 14"><defs><linearGradient id="fg" x1="0" y1="0" x2="0" y2="1"><stop offset="0" stop-color="#fff4b8"/><stop offset="1" stop-color="#f2d466"/></linearGradient></defs><path d="M1.5 10.5 V2.5 Q1.5 0.8 3.3 0.8 H5.8 Q6.8 0.8 7.4 2 L7.8 2.6 H13.2 Q14.5 2.6 14.5 4 V5" fill="#fdf4d0" stroke="#b8983c" stroke-width="1"/><path d="M3 4.6 H14.3 Q15.6 4.6 15.4 6 L14.8 10.4 Q14.6 11.6 13.4 11.6 H3.2 Q1.6 11.6 1.6 10.2 Z" fill="url(#fg)" stroke="#b8983c" stroke-width="1"/></svg></div>
<div class="tt" style="left:53px;top:875.15px">Primes</div>
<div class="pm" style="left:19px;top:895px"><div class="pm-h"></div><div class="pm-v"></div></div>
<div class="fdw" style="left:31px;top:893px"><svg class="fd" width="17" height="14" viewBox="0 0 17 14"><defs><linearGradient id="fg" x1="0" y1="0" x2="0" y2="1"><stop offset="0" stop-color="#fff4b8"/><stop offset="1" stop-color="#f2d466"/></linearGradient></defs><path d="M1.5 10.5 V2.5 Q1.5 0.8 3.3 0.8 H5.8 Q6.8 0.8 7.4 2 L7.8 2.6 H13.2 Q14.5 2.6 14.5 4 V5" fill="#fdf4d0" stroke="#b8983c" stroke-width="1"/><path d="M3 4.6 H14.3 Q15.6 4.6 15.4 6 L14.8 10.4 Q14.6 11.6 13.4 11.6 H3.2 Q1.6 11.6 1.6 10.2 Z" fill="url(#fg)" stroke="#b8983c" stroke-width="1"/></svg></div>
<div class="tt" style="left:53px;top:899.15px">Rappel</div>
<div class="pm" style="left:3px;top:919px"><div class="pm-h"></div><div class="pm-v"></div></div>
<div class="fdw" style="left:15px;top:917px"><svg class="fd" width="17" height="14" viewBox="0 0 17 14"><defs><linearGradient id="fg" x1="0" y1="0" x2="0" y2="1"><stop offset="0" stop-color="#fff4b8"/><stop offset="1" stop-color="#f2d466"/></linearGradient></defs><path d="M1.5 10.5 V2.5 Q1.5 0.8 3.3 0.8 H5.8 Q6.8 0.8 7.4 2 L7.8 2.6 H13.2 Q14.5 2.6 14.5 4 V5" fill="#fdf4d0" stroke="#b8983c" stroke-width="1"/><path d="M3 4.6 H14.3 Q15.6 4.6 15.4 6 L14.8 10.4 Q14.6 11.6 13.4 11.6 H3.2 Q1.6 11.6 1.6 10.2 Z" fill="url(#fg)" stroke="#b8983c" stroke-width="1"/></svg></div>
<div class="tt" style="left:37px;top:923.15px">G.E.D.</div></div>
<div class="a" style="left:2px;top:84px;width:1px;height:938px;background:#000"></div>
<div class="a" style="left:2px;top:84px;width:344px;height:1px;background:#101010"></div>
<div class="a" style="left:2px;top:1021px;width:344px;height:2px;background:#000"></div>
<div class="a" style="left:345px;top:84px;width:1px;height:939px;background:#000"></div>
<div class="a" style="left:327px;top:85px;width:17px;height:936px;background-color:#f4f4f4;background-image:repeating-conic-gradient(#c8c8c8 0 25%,#fafafa 0 50%);background-size:2px 2px"></div>
<div class="sbb" style="left:327px;top:85px;height:16px"><div class="arr-up"></div></div>
<div class="sbb" style="left:327px;top:247px;height:702px"></div>
<div class="sbb" style="left:327px;top:1004px;height:16px"><div class="arr-dn"></div></div>
<div class="a" style="left:346px;top:84px;width:2px;height:943px;background:#fff"></div>
<div class="a" style="left:348px;top:84px;width:1px;height:943px;background:#000"></div>
<div class="a" style="left:349px;top:84px;width:2px;height:943px;background:#f8f8f8"></div>
<div class="a" style="left:351px;top:62px;width:1px;height:965px;background:#707070"></div>
<div class="a" style="left:0px;top:1023px;width:352px;height:2px;background:#fff"></div>
<div class="a" style="left:0px;top:1025px;width:1677px;height:2px;background:#000"></div>
<div class="a" style="left:352px;top:64px;width:1325px;height:961px;background:linear-gradient(#fdfdfe 0%,#f9fafd 12%,#eef3fa 33%,#e2e9f4 62%,#cfdbeb 91%,#ccd9ea 100%)"></div>
<div class="t" style="left:371.6px;top:81.94px;font-size:12px;color:#111;transform:scaleX(.9);transform-origin:0 0;-webkit-text-stroke:0.15px #111;">MATRI</div>
<div class="a" style="left:410px;top:73px;width:65px;height:18px;background:#fff;border:1px solid #7a8c9c;box-sizing:border-box;"></div>
<div class="lk" style="left:481px;top:70px;width:20px;height:24px;border-color:#8a7c66;box-shadow:inset 0 0 0 1px #f0d8a8,inset 0 0 0 2px #e4bc78;background:linear-gradient(#fffce8,#fdf4e0)"><svg width="16" height="17" viewBox="0 0 16 17"><path d="M1.5 4.5 H14.5 L8 11 Z" fill="#eef6fc" stroke="#6a8aa4" stroke-width="1"/><rect x="4" y="12" width="2" height="2" fill="#000"/><rect x="7" y="12" width="2" height="2" fill="#000"/><rect x="10" y="12" width="2" height="2" fill="#000"/></svg></div>
<div class="t" style="left:518.5px;top:81.94px;font-size:12px;color:#111;transform:scaleX(.9);transform-origin:0 0;-webkit-text-stroke:0.15px #111;">Date Entrée</div>
<div class="a" style="left:579px;top:72px;width:352px;height:18px;background:#fff;border:1px solid #7a8c9c;box-sizing:border-box;"></div>
<div class="t" style="left:381.3px;top:108.54px;font-size:12px;color:#111;transform:scaleX(.9);transform-origin:0 0;-webkit-text-stroke:0.15px #111;">NOM</div>
<div class="a" style="left:410px;top:100px;width:521px;height:18px;background:#fff;border:1px solid #7a8c9c;box-sizing:border-box;"></div>
<div class="t" style="left:359.2px;top:127.54px;font-size:12px;color:#111;transform:scaleX(.9);transform-origin:0 0;-webkit-text-stroke:0.15px #111;">PRENOM</div>
<div class="a" style="left:410px;top:119px;width:521px;height:18px;background:#fff;border:1px solid #7a8c9c;box-sizing:border-box;"></div>
<div class="t" style="left:370px;top:146.54px;font-size:12px;color:#111;transform:scaleX(.9);transform-origin:0 0;-webkit-text-stroke:0.15px #111;">NOMJF</div>
<div class="a" style="left:410px;top:138px;width:521px;height:18px;background:#fff;border:1px solid #7a8c9c;box-sizing:border-box;"></div>
<div class="t" style="left:366px;top:166.04px;font-size:12px;color:#111;transform:scaleX(.9);transform-origin:0 0;-webkit-text-stroke:0.15px #111;"><u>S</u>it. Fam.</div>
<div class="a" style="left:410px;top:157px;width:93px;height:18px;background:#fff;border:1px solid #7a8c9c;box-sizing:border-box;"></div><div class="a" style="left:487px;top:158px;width:15px;height:16px;background:linear-gradient(#e4ecf8,#c4d4ea)"></div><div class="cdn" style="left:491px;top:164px"></div><div class="t" style="left:412px;top:165.64px;font-size:12px;color:#000;transform:scaleX(.875);transform-origin:0 0;">Célibataire</div>
<div class="t" style="left:646.2px;top:166.04px;font-size:12px;color:#111;transform:scaleX(.9);transform-origin:0 0;-webkit-text-stroke:0.15px #111;">Nbr. Enf.</div>
<div class="a" style="left:692px;top:158px;width:22px;height:17px;background:#fff;border:1px solid #7a8c9c;box-sizing:border-box;"></div><div class="t" style="left:692px;top:166.14px;font-size:12px;color:#000;transform:scaleX(.86);transform-origin:100% 0;width:19px;text-align:right;">0</div>
<div class="t" style="left:865.6px;top:166.04px;font-size:12px;color:#111;transform:scaleX(.9);transform-origin:0 0;-webkit-text-stroke:0.15px #111;">Enf. +10</div>
<div class="a" style="left:909px;top:158px;width:22px;height:17px;background:#fff;border:1px solid #7a8c9c;box-sizing:border-box;"></div><div class="t" style="left:909px;top:166.14px;font-size:12px;color:#000;transform:scaleX(.86);transform-origin:100% 0;width:19px;text-align:right;">0</div>
<div class="t" style="left:992.4px;top:81.04px;font-size:12px;color:#111;transform:scaleX(.9);transform-origin:0 0;-webkit-text-stroke:0.15px #111;">N° Matrice</div>
<div class="a" style="left:1049px;top:72px;width:183px;height:18px;background:#fff;border:1px solid #7a8c9c;box-sizing:border-box;"></div><div class="a" style="left:1216px;top:73px;width:15px;height:16px;background:linear-gradient(#e4ecf8,#c4d4ea)"></div><div class="cdn" style="left:1220px;top:79px"></div>
<div class="t" style="left:1247.5px;top:81.04px;font-size:12px;color:#111;transform:scaleX(.9);transform-origin:0 0;-webkit-text-stroke:0.15px #111;">Nationalité</div>
<div class="a" style="left:1301px;top:72px;width:93px;height:18px;background:#fff;border:1px solid #7a8c9c;box-sizing:border-box;"></div><div class="a" style="left:1378px;top:73px;width:15px;height:16px;background:linear-gradient(#e4ecf8,#c4d4ea)"></div><div class="cdn" style="left:1382px;top:79px"></div><div class="t" style="left:1303px;top:80.64px;font-size:12px;color:#000;transform:scaleX(.875);transform-origin:0 0;">Algérien</div>
<div class="a" style="left:990px;top:98px;width:221px;height:13px;background:#b8d0f4"></div>
<div class="a" style="left:990px;top:111px;width:221px;height:34px;background:linear-gradient(#eef4fc,#d8e4f6 50%,#bcd2f2)"></div>
<div class="a" style="left:1212px;top:98px;width:182px;height:13px;background:#b8d0f4"></div>
<div class="a" style="left:1212px;top:111px;width:182px;height:34px;background:linear-gradient(#eef4fc,#d8e4f6 50%,#bcd2f2)"></div>
<div class="t" style="left:990.5px;top:104.97px;font-size:12.2px;font-weight:bold;color:#6a94c8;">Salaire de Base</div>
<div class="t" style="left:1212.5px;top:104.97px;font-size:12.2px;font-weight:bold;color:#6a94c8;">I.E.P.</div>
<div class="t" style="left:1006.7px;top:127.54px;font-size:12px;color:#111;transform:scaleX(.9);transform-origin:0 0;-webkit-text-stroke:0.15px #111;">Categ.</div>
<div class="a" style="left:1042px;top:118px;width:16px;height:18px;background:#fff;border:1px solid #7a8c9c;box-sizing:border-box;"></div>
<div class="t" style="left:1066px;top:127.54px;font-size:12px;color:#111;transform:scaleX(.9);transform-origin:0 0;-webkit-text-stroke:0.15px #111;">Sect.</div>
<div class="a" style="left:1095px;top:118px;width:16px;height:18px;background:#fff;border:1px solid #7a8c9c;box-sizing:border-box;"></div>
<div class="t" style="left:1119.2px;top:127.54px;font-size:12px;color:#111;transform:scaleX(.9);transform-origin:0 0;-webkit-text-stroke:0.15px #111;">Indice</div>
<div class="a" style="left:1152px;top:118px;width:52px;height:18px;background:#fff;border:1px solid #7a8c9c;box-sizing:border-box;"></div><div class="t" style="left:1152px;top:126.64px;font-size:12px;color:#000;transform:scaleX(.86);transform-origin:100% 0;width:49px;text-align:right;">0</div>
<div class="t" style="left:1216.7px;top:128.04px;font-size:12px;color:#111;transform:scaleX(.9);transform-origin:0 0;-webkit-text-stroke:0.15px #111;">Categ.</div>
<div class="a" style="left:1252px;top:119px;width:16px;height:18px;background:#fff;border:1px solid #7a8c9c;box-sizing:border-box;"></div>
<div class="t" style="left:1280.3px;top:128.04px;font-size:12px;color:#111;transform:scaleX(.9);transform-origin:0 0;-webkit-text-stroke:0.15px #111;">Sect.</div>
<div class="a" style="left:1309px;top:119px;width:16px;height:18px;background:#fff;border:1px solid #7a8c9c;box-sizing:border-box;"></div>
<div class="t" style="left:1341.4px;top:128.04px;font-size:12px;color:#111;transform:scaleX(.9);transform-origin:0 0;-webkit-text-stroke:0.15px #111;">Ech.</div>
<div class="a" style="left:1367px;top:119px;width:16px;height:18px;background:#fff;border:1px solid #7a8c9c;box-sizing:border-box;"></div>
<div class="rd" style="left:993px;top:155px;border-color:#5aa85a;"><div class="rdd"></div></div>
<div class="t" style="left:1011.8px;top:161.54px;font-size:12px;color:#111;transform:scaleX(.9);transform-origin:0 0;-webkit-text-stroke:0.15px #111;">Contractuel</div>
<div class="rd" style="left:1074px;top:155px;"></div>
<div class="t" style="left:1092.9px;top:161.54px;font-size:12px;color:#111;transform:scaleX(.9);transform-origin:0 0;-webkit-text-stroke:0.15px #111;">Journalier</div>
<div class="rd" style="left:1155px;top:155px;"></div>
<div class="t" style="left:1174.3px;top:161.54px;font-size:12px;color:#111;transform:scaleX(.9);transform-origin:0 0;-webkit-text-stroke:0.15px #111;">Horaire</div>
<div class="rd" style="left:1236px;top:155px;"></div>
<div class="t" style="left:1254.7px;top:161.54px;font-size:12px;color:#111;transform:scaleX(.9);transform-origin:0 0;-webkit-text-stroke:0.15px #111;">Consultant</div>
<div class="t" style="left:1323.3px;top:161.54px;font-size:12px;color:#111;transform:scaleX(.9);transform-origin:0 0;-webkit-text-stroke:0.15px #111;">Absence</div>
<div class="a" style="left:1372px;top:153px;width:22px;height:18px;background:#fff;border:1px solid #7a8c9c;box-sizing:border-box;"></div><div class="t" style="left:1372px;top:161.64px;font-size:12px;color:#000;transform:scaleX(.86);transform-origin:100% 0;width:19px;text-align:right;">0</div>
<div class="a" style="left:358px;top:177px;width:1319px;height:1px;background:#a8acb0"></div>
<div class="a" style="left:358px;top:178px;width:1319px;height:1px;background:#ffffff"></div>
<div class="a" style="left:358px;top:187px;width:1185px;height:745px;border:1px solid #7a8ca0;box-sizing:border-box;background:#fffdea"></div>
<div class="grid" style="left:359px;top:188px;width:1165px;height:743px"><div class="gr" style="top:17px;background:#fffeea"></div>
<div class="gr" style="top:36px;background:#f1f6fd"></div>
<div class="gr" style="top:55px;background:#fffeea"></div>
<div class="gr" style="top:74px;background:#f1f6fd"></div>
<div class="gr" style="top:93px;background:#fffeea"></div>
<div class="gr" style="top:112px;background:#f1f6fd"></div>
<div class="gr" style="top:131px;background:#fffeea"></div>
<div class="gr" style="top:150px;background:#f1f6fd"></div>
<div class="gr" style="top:169px;background:#fffeea"></div>
<div class="gr" style="top:188px;background:#f1f6fd"></div>
<div class="gr" style="top:207px;background:#fffeea"></div>
<div class="gr" style="top:226px;background:#f1f6fd"></div>
<div class="gr" style="top:245px;background:#fffeea"></div>
<div class="gr" style="top:264px;background:#f1f6fd"></div>
<div class="gr" style="top:283px;background:#fffeea"></div>
<div class="gr" style="top:302px;background:#f1f6fd"></div>
<div class="gr" style="top:321px;background:#fffeea"></div>
<div class="gr" style="top:340px;background:#f1f6fd"></div>
<div class="gr" style="top:359px;background:#fffeea"></div>
<div class="gr" style="top:378px;background:#f1f6fd"></div>
<div class="gr" style="top:397px;background:#fffeea"></div>
<div class="gr" style="top:416px;background:#f1f6fd"></div>
<div class="gr" style="top:435px;background:#fffeea"></div>
<div class="gr" style="top:454px;background:#f1f6fd"></div>
<div class="gr" style="top:473px;background:#fffeea"></div>
<div class="gr" style="top:492px;background:#f1f6fd"></div>
<div class="gr" style="top:511px;background:#fffeea"></div>
<div class="gr" style="top:530px;background:#f1f6fd"></div>
<div class="gr" style="top:549px;background:#fffeea"></div>
<div class="gr" style="top:568px;background:#f1f6fd"></div>
<div class="gr" style="top:587px;background:#fffeea"></div>
<div class="gr" style="top:606px;background:#f1f6fd"></div>
<div class="gr" style="top:625px;background:#fffeea"></div>
<div class="gr" style="top:644px;background:#f1f6fd"></div>
<div class="gr" style="top:663px;background:#fffeea"></div>
<div class="gr" style="top:682px;background:#f1f6fd"></div>
<div class="gr" style="top:701px;background:#fffeea"></div>
<div class="gr" style="top:720px;background:#f1f6fd"></div>
<div class="gr" style="top:739px;background:#fffeea"></div></div>
<div class="a" style="left:359px;top:188px;width:1165px;height:17px;background:linear-gradient(#eaf1fc 0%,#c6d2e4 15%,#a4b6d2 32%,#809ec8 50%,#6886b6 66%,#4a72a2 82%,#315c8a 92%,#24486a 100%)"></div>
<div class="t" style="left:359px;top:196.74px;font-size:12px;font-weight:bold;color:#f4f8ff;width:129px;text-align:center;">IND</div>
<div class="t" style="left:488px;top:196.74px;font-size:12px;font-weight:bold;color:#f4f8ff;width:500px;text-align:center;">Libellé</div>
<div class="a" style="left:487px;top:205px;width:1px;height:726px;background:#e0e0dc"></div>
<div class="t" style="left:988px;top:196.74px;font-size:12px;font-weight:bold;color:#f4f8ff;width:179px;text-align:center;">BASE</div>
<div class="a" style="left:987px;top:205px;width:1px;height:726px;background:#e0e0dc"></div>
<div class="t" style="left:1167px;top:196.74px;font-size:12px;font-weight:bold;color:#f4f8ff;width:179px;text-align:center;">TAUX</div>
<div class="a" style="left:1166px;top:205px;width:1px;height:726px;background:#e0e0dc"></div>
<div class="t" style="left:1346px;top:196.74px;font-size:12px;font-weight:bold;color:#f4f8ff;width:178px;text-align:center;">MONTANT</div>
<div class="a" style="left:1345px;top:205px;width:1px;height:726px;background:#e0e0dc"></div>
<div class="srt" style="left:359px;top:188px"><svg width="6" height="8" viewBox="0 0 6 8"><path d="M0.5 3 L3 0.5 L5.5 3 Z M0.5 4.5 L3 7 L5.5 4.5 Z" fill="#101828"/></svg></div>
<div class="srt" style="left:488px;top:188px"><svg width="6" height="8" viewBox="0 0 6 8"><path d="M0.5 3 L3 0.5 L5.5 3 Z M0.5 4.5 L3 7 L5.5 4.5 Z" fill="#101828"/></svg></div>
<div class="srt" style="left:988px;top:188px"><svg width="6" height="8" viewBox="0 0 6 8"><path d="M0.5 3 L3 0.5 L5.5 3 Z M0.5 4.5 L3 7 L5.5 4.5 Z" fill="#101828"/></svg></div>
<div class="srt" style="left:1167px;top:188px"><svg width="6" height="8" viewBox="0 0 6 8"><path d="M0.5 3 L3 0.5 L5.5 3 Z M0.5 4.5 L3 7 L5.5 4.5 Z" fill="#101828"/></svg></div>
<div class="srt" style="left:1346px;top:188px"><svg width="6" height="8" viewBox="0 0 6 8"><path d="M0.5 3 L3 0.5 L5.5 3 Z M0.5 4.5 L3 7 L5.5 4.5 Z" fill="#101828"/></svg></div>
<div class="mag" style="left:476px;top:190px"><svg width="12" height="12" viewBox="0 0 12 12"><path d="M6.2 6.2 L10.6 10.6" stroke="#0a1450" stroke-width="2.8" stroke-linecap="round"/><path d="M6.6 6.6 L10.2 10.2" stroke="#f0f4ff" stroke-width="1" stroke-linecap="round"/><circle cx="4.3" cy="4.3" r="3.2" fill="#cfd4dc" stroke="#3a4250" stroke-width="1"/><circle cx="3.8" cy="3.8" r="1.5" fill="#f4f4f4"/></svg></div>
<div class="mag" style="left:976px;top:190px"><svg width="12" height="12" viewBox="0 0 12 12"><path d="M6.2 6.2 L10.6 10.6" stroke="#0a1450" stroke-width="2.8" stroke-linecap="round"/><path d="M6.6 6.6 L10.2 10.2" stroke="#f0f4ff" stroke-width="1" stroke-linecap="round"/><circle cx="4.3" cy="4.3" r="3.2" fill="#cfd4dc" stroke="#3a4250" stroke-width="1"/><circle cx="3.8" cy="3.8" r="1.5" fill="#f4f4f4"/></svg></div>
<div class="mag" style="left:1155px;top:190px"><svg width="12" height="12" viewBox="0 0 12 12"><path d="M6.2 6.2 L10.6 10.6" stroke="#0a1450" stroke-width="2.8" stroke-linecap="round"/><path d="M6.6 6.6 L10.2 10.2" stroke="#f0f4ff" stroke-width="1" stroke-linecap="round"/><circle cx="4.3" cy="4.3" r="3.2" fill="#cfd4dc" stroke="#3a4250" stroke-width="1"/><circle cx="3.8" cy="3.8" r="1.5" fill="#f4f4f4"/></svg></div>
<div class="mag" style="left:1334px;top:190px"><svg width="12" height="12" viewBox="0 0 12 12"><path d="M6.2 6.2 L10.6 10.6" stroke="#0a1450" stroke-width="2.8" stroke-linecap="round"/><path d="M6.6 6.6 L10.2 10.2" stroke="#f0f4ff" stroke-width="1" stroke-linecap="round"/><circle cx="4.3" cy="4.3" r="3.2" fill="#cfd4dc" stroke="#3a4250" stroke-width="1"/><circle cx="3.8" cy="3.8" r="1.5" fill="#f4f4f4"/></svg></div>
<div class="mag" style="left:1512px;top:190px"><svg width="12" height="12" viewBox="0 0 12 12"><path d="M6.2 6.2 L10.6 10.6" stroke="#0a1450" stroke-width="2.8" stroke-linecap="round"/><path d="M6.6 6.6 L10.2 10.2" stroke="#f0f4ff" stroke-width="1" stroke-linecap="round"/><circle cx="4.3" cy="4.3" r="3.2" fill="#cfd4dc" stroke="#3a4250" stroke-width="1"/><circle cx="3.8" cy="3.8" r="1.5" fill="#f4f4f4"/></svg></div>
<div class="a" style="left:1524px;top:188px;width:18px;height:743px;background:#efefef"></div>
<div class="a" style="left:1524px;top:188px;width:18px;height:17px;background:linear-gradient(#f0f5fc,#c8d8f0)"></div>
<div class="a" style="left:1529px;top:194px;width:0;height:0;border-left:4px solid transparent;border-right:4px solid transparent;border-bottom:4px solid #7a7a80"></div>
<div class="a" style="left:1524px;top:914px;width:18px;height:17px;background:linear-gradient(#f4f8fe,#c8d8f0)"></div>
<div class="a" style="left:1529px;top:921px;width:0;height:0;border-left:4px solid transparent;border-right:4px solid transparent;border-top:4px solid #7a7a80"></div>
<div class="t" style="left:1555px;top:195.74px;font-size:12px;color:#111;transform:scaleX(.9);transform-origin:0 0;-webkit-text-stroke:0.15px #111;"><u>P</u>aie</div>
<div class="a" style="left:1583px;top:187px;width:82px;height:18px;background:#fff;border:1px solid #7a8c9c;box-sizing:border-box;"></div><div class="a" style="left:1649px;top:188px;width:15px;height:16px;background:linear-gradient(#e4ecf8,#c4d4ea)"></div><div class="cdn" style="left:1653px;top:194px"></div><div class="t" style="left:1585px;top:195.64px;font-size:12px;color:#000;transform:scaleX(.875);transform-origin:0 0;">En cours</div>
<div class="a" style="left:1585px;top:239px;width:80px;height:24px;border:1px solid #8a9298;border-radius:3px;box-sizing:border-box;background:linear-gradient(#fbfbfb 0%,#f0f0f0 45%,#e2e4e6 55%,#eceef0 100%)"></div><svg class="a" style="left:1586px;top:242px" width="20" height="18" viewBox="0 0 20 18"><polygon points="11.80,6.60 10.22,7.71 10.85,9.54 8.92,9.51 8.35,11.36 6.80,10.20 5.25,11.36 4.68,9.51 2.75,9.54 3.38,7.71 1.80,6.60 3.38,5.49 2.75,3.66 4.68,3.69 5.25,1.84 6.80,3.00 8.35,1.84 8.92,3.69 10.85,3.66 10.22,5.49" fill="#c89030"/><circle cx="6.8" cy="6.6" r="3.10" fill="#c89030"/><circle cx="6.8" cy="6.6" r="1.25" fill="#e8b860"/><polygon points="17.70,11.20 16.44,12.16 16.79,13.71 15.20,13.63 14.48,15.04 13.31,13.97 11.85,14.58 11.65,13.00 10.14,12.53 10.99,11.20 10.14,9.87 11.65,9.40 11.85,7.82 13.31,8.43 14.48,7.36 15.20,8.77 16.79,8.69 16.44,10.24" fill="#c08828"/><circle cx="13.8" cy="11.2" r="2.42" fill="#c08828"/><circle cx="13.8" cy="11.2" r="0.97" fill="#e8b860"/></svg><div class="t" style="left:1460.5px;top:250.74px;font-size:12px;color:#111;transform:scaleX(.85);transform-origin:100% 0;-webkit-text-stroke:0.15px #111;width:200px;text-align:right;"><u>C</u>alculer</div>
<div class="a" style="left:1585px;top:288px;width:80px;height:24px;border:1px solid #8a9298;border-radius:3px;box-sizing:border-box;background:linear-gradient(#fbfbfb 0%,#f0f0f0 45%,#e2e4e6 55%,#eceef0 100%)"></div><svg class="a" style="left:1588px;top:291px" width="17" height="17" viewBox="0 0 17 17"><polygon points="5.3,1.2 11.7,1.2 15.8,5.3 15.8,11.7 11.7,15.8 5.3,15.8 1.2,11.7 1.2,5.3" fill="#fbe8e0" stroke="#7a1010" stroke-width="2.2"/><path d="M3.6 3.6 L13.4 13.4" stroke="#7a1010" stroke-width="2.6"/></svg><div class="t" style="left:1460.5px;top:299.74px;font-size:12px;color:#111;transform:scaleX(.85);transform-origin:100% 0;-webkit-text-stroke:0.15px #111;width:200px;text-align:right;"><u>F</u>ermer</div>
<div class="nb" style="left:1562px;top:341px"><svg width="18" height="18" viewBox="0 0 18 18"><path d="M9 1.3 V14.2 L2.3 7.75 Z" fill="#2a9ad0" stroke="#1a6a90" stroke-width=".7"/><path d="M12.9 1.3 V14.2 L6.2 7.75 Z" fill="#48b4e4" stroke="#1a6a90" stroke-width=".7"/></svg></div>
<div class="nb" style="left:1592px;top:341px"><svg width="18" height="18" viewBox="0 0 18 18"><path d="M10.9 1.3 V14.2 L4.1 7.75 Z" fill="#44b0e0" stroke="#1a6a90" stroke-width=".7"/></svg></div>
<div class="nb" style="left:1622px;top:341px"><svg width="18" height="18" viewBox="0 0 18 18"><path d="M4 1.3 V14.2 L10.8 7.75 Z" fill="#44b0e0" stroke="#1a6a90" stroke-width=".7"/></svg></div>
<div class="nb" style="left:1652px;top:341px"><svg width="18" height="18" viewBox="0 0 18 18"><path d="M2 1.3 V14.2 L8.7 7.75 Z" fill="#2a9ad0" stroke="#1a6a90" stroke-width=".7"/><path d="M6 1.3 V14.2 L13 7.75 Z" fill="#48b4e4" stroke="#1a6a90" stroke-width=".7"/></svg></div>
<div class="a" style="left:358px;top:941px;width:1319px;height:84px;background:linear-gradient(#f8faff 0%,#eef3fc 25%,#d8e4f8 60%,#bcd2f2 100%)"></div>
<div class="t" style="left:360.7px;top:947.84px;font-size:12px;font-weight:bold;color:#5c8cbc;letter-spacing:-0.05px;">Utiliser la Touche &lt; INS &gt; pour insérer une nouvelle rubrique et la touche &lt; Suppr &gt; pour supprimer une rubrique</div>
<div class="a" style="left:360px;top:960px;width:1183px;height:1px;background:#a0a4a8"></div>
<div class="a" style="left:360px;top:961px;width:1183px;height:1px;background:#ffffff"></div>
<div class="t" style="left:362.0px;top:976.54px;font-size:12px;color:#111;transform:scaleX(.9);transform-origin:0 0;-webkit-text-stroke:0.15px #111;">Code</div>
<div class="a" style="left:392px;top:968px;width:43px;height:18px;background:#fff;border:1px solid #7a8c9c;box-sizing:border-box;"></div>
<div class="lk" style="left:441px;top:964px;width:20px;height:23px;border-color:#8a9aa8;background:linear-gradient(#f8fafc,#dde6f0)"><svg width="16" height="17" viewBox="0 0 16 17"><path d="M1.5 4.5 H14.5 L8 11 Z" fill="#eef6fc" stroke="#6a8aa4" stroke-width="1"/><rect x="4" y="12" width="2" height="2" fill="#000"/><rect x="7" y="12" width="2" height="2" fill="#000"/><rect x="10" y="12" width="2" height="2" fill="#000"/></svg></div>
<div class="t" style="left:503.9px;top:976.54px;font-size:12px;color:#111;transform:scaleX(.9);transform-origin:0 0;-webkit-text-stroke:0.15px #111;">Libellé</div>
<div class="a" style="left:538px;top:968px;width:310px;height:18px;background:#fff;border:1px solid #7a8c9c;box-sizing:border-box;"></div>
<div class="t" style="left:359.9px;top:1004.54px;font-size:12px;color:#111;transform:scaleX(.9);transform-origin:0 0;-webkit-text-stroke:0.15px #111;"><u>B</u>ase</div>
<div class="a" style="left:392px;top:996px;width:88px;height:18px;background:#fff;border:1px solid #7a8c9c;box-sizing:border-box;"></div><div class="t" style="left:392px;top:1004.64px;font-size:12px;color:#000;transform:scaleX(.86);transform-origin:100% 0;width:85px;text-align:right;">0,00</div>
<div class="t" style="left:504.6px;top:1004.54px;font-size:12px;color:#111;transform:scaleX(.9);transform-origin:0 0;-webkit-text-stroke:0.15px #111;"><u>T</u>aux</div>
<div class="a" style="left:537px;top:996px;width:88px;height:18px;background:#fff;border:1px solid #7a8c9c;box-sizing:border-box;"></div><div class="t" style="left:537px;top:1004.64px;font-size:12px;color:#000;transform:scaleX(.86);transform-origin:100% 0;width:85px;text-align:right;">0,00</div>
<div class="t" style="left:710.8px;top:1004.54px;font-size:12px;color:#111;transform:scaleX(.9);transform-origin:0 0;-webkit-text-stroke:0.15px #111;"><u>M</u>ontant</div>
<div class="a" style="left:760px;top:996px;width:88px;height:18px;background:#fff;border:1px solid #7a8c9c;box-sizing:border-box;"></div><div class="t" style="left:760px;top:1004.64px;font-size:12px;color:#000;transform:scaleX(.86);transform-origin:100% 0;width:85px;text-align:right;">0,00</div>
<div class="a" style="left:886px;top:978px;width:94px;height:24px;border:1px solid #8a9298;border-radius:3px;box-sizing:border-box;background:linear-gradient(#fbfbfb 0%,#f0f0f0 45%,#e2e4e6 55%,#eceef0 100%)"></div><svg class="a" style="left:888px;top:981px" width="18" height="18" viewBox="0 0 18 18"><circle cx="8.8" cy="9" r="8" fill="#0e8a18"/><circle cx="8" cy="7.5" r="5.5" fill="#18b020" opacity=".7"/><path d="M4.8 9.2 L8 12.8 L13 5.2" fill="none" stroke="#b0f8b0" stroke-width="2.6" stroke-linejoin="round"/></svg><div class="t" style="left:775.5px;top:989.74px;font-size:12px;color:#111;transform:scaleX(.85);transform-origin:100% 0;-webkit-text-stroke:0.15px #111;width:200px;text-align:right;"><u>E</u>nregistrer</div>
<div class="a" style="left:1582px;top:953px;width:80px;height:24px;border:1px solid #8a9298;border-radius:3px;box-sizing:border-box;background:linear-gradient(#fbfbfb 0%,#f0f0f0 45%,#e2e4e6 55%,#eceef0 100%)"></div><div class="t" style="left:1455px;top:964.74px;font-size:12px;color:#111;transform:scaleX(.85);transform-origin:100% 0;-webkit-text-stroke:0.15px #111;width:200px;text-align:right;"><u>I</u>NS&nbsp; - &nbsp;Inserer</div>
<div class="a" style="left:1582px;top:991px;width:80px;height:24px;border:1px solid #8a9298;border-radius:3px;box-sizing:border-box;background:linear-gradient(#fbfbfb 0%,#f0f0f0 45%,#e2e4e6 55%,#eceef0 100%)"></div><div class="t" style="left:1458px;top:1002.74px;font-size:12px;color:#111;transform:scaleX(.85);transform-origin:100% 0;-webkit-text-stroke:0.15px #111;width:200px;text-align:right;"><u>S</u>UP - suprimer</div>
<div class="a" style="left:0px;top:1027px;width:1677px;height:21px;background:#f0f0f0"></div>
<div class="a" style="left:0px;top:1048px;width:47px;height:1px;background:#000"></div>
<div class="a" style="left:47px;top:1048px;width:343px;height:1px;background:#c4c4c4"></div>
<div class="a" style="left:390px;top:1048px;width:1287px;height:1px;background:#000"></div>
</body></html>
